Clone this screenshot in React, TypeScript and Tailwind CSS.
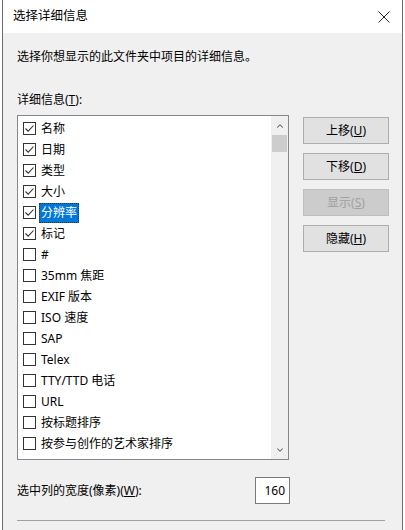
import { ChevronUp, ChevronDown } from "lucide-react";

const items = [
  { label: "名称", checked: true },
  { label: "日期", checked: true },
  { label: "类型", checked: true },
  { label: "大小", checked: true },
  { label: "分辨率", checked: true, selected: true },
  { label: "标记", checked: true },
  { label: "#", checked: false },
  { label: "35mm 焦距", checked: false },
  { label: "EXIF 版本", checked: false },
  { label: "ISO 速度", checked: false },
  { label: "SAP", checked: false },
  { label: "Telex", checked: false },
  { label: "TTY/TTD 电话", checked: false },
  { label: "URL", checked: false },
  { label: "按标题排序", checked: false },
  { label: "按参与创作的艺术家排序", checked: false },
];

const buttons = [
  { text: "上移", key: "U" },
  { text: "下移", key: "D" },
  { text: "显示", key: "S", disabled: true },
  { text: "隐藏", key: "H" },
];

const Checkbox = ({ checked }: { checked: boolean }) => (
  <span className="w-[13px] h-[13px] border border-[#333] bg-white flex items-center justify-center shrink-0">
    {checked && (
      <svg width="11" height="11" viewBox="0 0 11 11">
        <path d="M1.5 5.5 L4.2 8.2 L9.5 2.5" fill="none" stroke="#333" strokeWidth="1.1" />
      </svg>
    )}
  </span>
);

const App = () => {
  return (
    <div
      className="w-[405px] h-[530px] bg-white overflow-hidden text-[12px] text-black"
      style={{ fontFamily: '"Noto Sans", "Noto Sans CJK SC", sans-serif' }}
    >
      <div className="ml-[2px] w-[401px] h-full border-x border-[#6d6d6d] flex flex-col">
        {/* Title bar */}
        <div className="h-[33px] bg-white flex items-center justify-between pl-[10px] pr-[10px] shrink-0">
          <span className="text-[12.5px]">选择详细信息</span>
          <svg width="12" height="12" viewBox="0 0 12 12" className="mr-[2px]">
            <path d="M0.5 0.5 L11.5 11.5 M11.5 0.5 L0.5 11.5" stroke="#222" strokeWidth="1" />
          </svg>
        </div>

        {/* Body */}
        <div className="flex-1 bg-[#f0f0f0] pl-[14px] pr-[13px] pt-[16px] flex flex-col">
          <p className="leading-[16px]">选择你想显示的此文件夹中项目的详细信息。</p>
          <p className="leading-[16px] mt-[27px]">
            详细信息(<span className="underline">T</span>):
          </p>

          <div className="flex mt-[7px] gap-[14px]">
            {/* List */}
            <div className="w-[272px] h-[345px] border border-[#828790] bg-white flex">
              <div className="flex-1 pt-[2px] pl-[5px]">
                {items.map((item, i) => (
                  <div key={i} className="h-[21px] flex items-center">
                    <Checkbox checked={item.checked} />
                    <span
                      className={
                        item.selected
                          ? "ml-[3px] px-[2px] h-[20px] leading-[20px] bg-[#0078d7] text-white outline-1 outline-dotted outline-[#333] -outline-offset-1"
                          : "ml-[3px] px-[2px] leading-[20px]"
                      }
                    >
                      {item.label}
                    </span>
                  </div>
                ))}
              </div>
              {/* Scrollbar */}
              <div className="w-[17px] bg-[#f0f0f0] flex flex-col">
                <div className="h-[19px] flex items-center justify-center">
                  <ChevronUp size={10} strokeWidth={2.5} color="#606060" />
                </div>
                <div className="h-[17px] bg-[#cdcdcd] mx-[1px]" />
                <div className="flex-1" />
                <div className="h-[19px] flex items-center justify-center">
                  <ChevronDown size={10} strokeWidth={2.5} color="#606060" />
                </div>
              </div>
            </div>

            {/* Buttons */}
            <div className="flex flex-col gap-[9px] pt-[2px]">
              {buttons.map((b) => (
                <div
                  key={b.key}
                  className={
                    b.disabled
                      ? "w-[86px] h-[27px] border border-[#bfbfbf] bg-[#cccccc] text-[#a0a0a0] flex items-center justify-center"
                      : "w-[86px] h-[27px] border border-[#adadad] bg-[#e1e1e1] flex items-center justify-center"
                  }
                >
                  {b.text}(<span className="underline">{b.key}</span>)
                </div>
              ))}
            </div>
          </div>

          {/* Width row */}
          <div className="flex items-center justify-between w-[273px] mt-[17px]">
            <span>
              选中列的宽度(像素)(<span className="underline">W</span>):
            </span>
            <div className="w-[35px] h-[27px] border border-[#7a7a7a] bg-white flex items-center justify-end pr-[4px]">
              160
            </div>
          </div>

          <div className="mt-[16px] w-[368px] h-[1px] bg-[#a0a0a0]" />
        </div>
      </div>
    </div>
  );
};

export default App;
